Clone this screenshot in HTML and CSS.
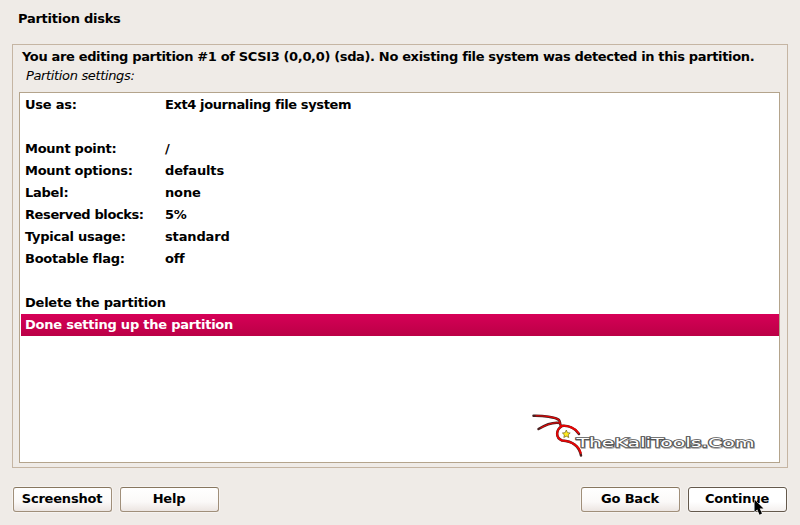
FILE: index.html
```html
<!DOCTYPE html>
<html lang="en">
<head>
<meta charset="utf-8">
<title>Partition disks</title>
<link rel="stylesheet" href="styles.css">
</head>
<body>
<h1 class="title">Partition disks</h1>
<main class="frame">
  <p class="question">You are editing partition #1 of SCSI3 (0,0,0) (sda). No existing file system was detected in this partition.</p>
  <p class="caption">Partition settings:</p>
  <div class="list">
    <div class="row"><span>Use as:</span><span class="tight">Ext4 journaling file system</span></div>
    <div class="row"></div>
    <div class="row"><span>Mount point:</span><span>/</span></div>
    <div class="row"><span>Mount options:</span><span class="loose">defaults</span></div>
    <div class="row"><span>Label:</span><span class="loose">none</span></div>
    <div class="row"><span class="tight">Reserved blocks:</span><span>5%</span></div>
    <div class="row"><span>Typical usage:</span><span class="loose">standard</span></div>
    <div class="row"><span>Bootable flag:</span><span>off</span></div>
    <div class="row"></div>
    <div class="row action">Delete the partition</div>
    <div class="row action selected">Done setting up the partition</div>
  </div>
</main>
<footer class="buttons">
  <button>Screenshot</button>
  <button>Help</button>
  <span class="spacer"></span>
  <button>Go Back</button>
  <button class="hover">Continue</button>
</footer>
<svg class="logo" width="230" height="50" viewBox="530 410 230 50">
  <g class="dragon-edge">
    <path d="M533.500 415.700C543 415.500 556 417 559 420C560.500 422 559.500 424 561 426C568 425 575 428 579 434"/>
    <path d="M538.500 429C545 425 554 422 560 423"/>
    <path d="M562 426C555.500 430 555.500 438 562 440.500C572 441 579 446 581 455.500"/>
  </g>
  <g class="dragon">
    <path d="M536 415.800C543 415.500 556 417 559 420C560.500 422 559.500 424 561 426"/>
    <path d="M541 427.800C545 425 554 422 560 423"/>
    <path class="thick" d="M561 426C568 425 575 428 578.500 433"/>
    <path class="thick" d="M562 426C555.500 430 555.500 438 562 440.500C572 441 579 446 580.700 453"/>
  </g>
  <path class="star" d="M566.300 430L567.500 432.700L570.200 433L568.200 434.900L568.800 437.500L566.300 436.200L563.800 437.500L564.400 434.900L562.400 433L565.100 432.700Z"/>
  <text class="brand shadow" x="577" y="447.800" textLength="178" lengthAdjust="spacingAndGlyphs">TheKaliTools.Com</text>
  <text class="brand" x="576.500" y="447.300" textLength="178" lengthAdjust="spacingAndGlyphs">TheKaliTools.Com</text>
</svg>
<svg class="cursor" width="11" height="17" viewBox="0 0 11 17">
  <path d="M.5 .5V13L3.300 10.500L5.500 15.700L8 14.600L5.700 9.500H9.500Z"/>
</svg>
</body>
</html>
```

FILE: styles.css
```css
* { box-sizing: border-box; }
body {
  margin: 0;
  width: 800px;
  height: 525px;
  overflow: hidden;
  display: flex;
  flex-direction: column;
  background: #efebe7;
  color: #000;
  font: bold 13px/22px "DejaVu Sans", sans-serif;
  letter-spacing: -.25px;
}
.title { margin: 8px 0 14px 18px; font-size: 13px; line-height: 22px; }
.frame {
  margin: 0 12px;
  height: 424px;
  padding: 2px 7px 4px 6px;
  border: 1px solid #c5b5a3;
  display: flex;
  flex-direction: column;
}
.question { margin: 0 0 0 3px; line-height: 20px; white-space: nowrap; letter-spacing: -.35px; }
.caption { margin: 0 0 7px 7px; font-weight: normal; font-style: italic; line-height: 18px; letter-spacing: -.35px; }
.list {
  flex: 1;
  border: 1px solid #b4a48c;
  background: #fff;
  padding: 1px 0 0 1px;
}
.row { height: 22px; padding-left: 4px; display: grid; grid-template-columns: 140px 1fr; white-space: nowrap; }
.tight { letter-spacing: -.39px; }
.loose { letter-spacing: -.15px; }
.action { display: block; letter-spacing: -.23px; }
.selected { color: #fff; background: linear-gradient(#d60057, #bb0046); }
.buttons { display: flex; gap: 8px; margin: 19px 13px 0; }
.spacer { flex: 1; }
button {
  width: 99px;
  height: 25px;
  padding: 0 1px 1px 0;
  border: 1px solid #a08f7a;
  border-top-color: #87765f;
  border-radius: 3px;
  background: linear-gradient(#fff, #fbf9f8 60%, #ece5e1);
  color: #000;
  font: inherit;
  letter-spacing: -.2px;
  box-shadow: 0 0 0 1px #f6f3f0;
}
.hover { border-color: #64594c; background: linear-gradient(#fff, #fff 60%, #f4f0ee); }
.logo { position: absolute; left: 530px; top: 410px; }
.dragon, .dragon-edge { fill: none; stroke-linecap: round; }
.dragon-edge { stroke: #4b2020; stroke-width: 2.5; }
.dragon { stroke: #e60505; stroke-width: 1.1; }
.dragon .thick { stroke-width: 2; }
.star { fill: #ffeb20; stroke: #716317; stroke-width: .7; }
.brand {
  font: normal 13px "DejaVu Sans", sans-serif;
  letter-spacing: 0;
  fill: #fff;
  stroke: #555;
  stroke-width: 1.7;
  paint-order: stroke;
}
.shadow { stroke: #aaa; }
.cursor { position: absolute; left: 754px; top: 499px; overflow: visible; }
.cursor path { fill: #000; stroke: #fff; stroke-width: 1; paint-order: stroke; }
```
